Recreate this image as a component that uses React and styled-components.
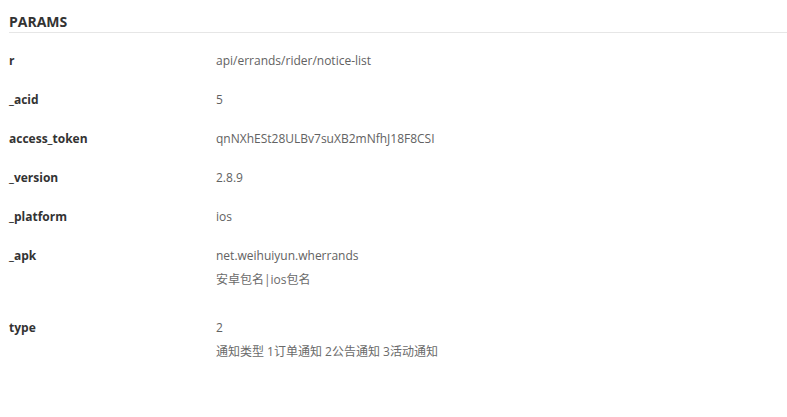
import React from "react";
import styled, { createGlobalStyle } from "styled-components";

const GlobalStyle = createGlobalStyle`
  html, body {
    margin: 0;
    padding: 0;
    background: #fff;
  }
  body {
    font-family: "Open Sans", "Noto Sans CJK SC", sans-serif;
  }
`;

const params = [
  { name: "r", value: "api/errands/rider/notice-list" },
  { name: "_acid", value: "5" },
  { name: "access_token", value: "qnNXhESt28ULBv7suXB2mNfhJ18F8CSI" },
  { name: "_version", value: "2.8.9" },
  { name: "_platform", value: "ios" },
  { name: "_apk", value: "net.weihuiyun.wherrands", desc: "安卓包名|ios包名" },
  { name: "type", value: "2", desc: "通知类型 1订单通知 2公告通知 3活动通知" },
];

const Section = styled.section`
  padding: 0 0 0 9px;
`;

const Title = styled.h3`
  margin: 0;
  padding: 12px 0 1px;
  font-size: 14px;
  line-height: 19px;
  font-weight: 700;
  color: #333;
  border-bottom: 1px solid #e6e6e6;
`;

const Table = styled.div`
  display: flex;
  flex-direction: column;
  padding-top: 8px;
`;

const Row = styled.div`
  display: grid;
  grid-template-columns: 207px 1fr;
  padding: 10px 0;
  font-size: 12px;
  line-height: 19px;
`;

const Name = styled.div`
  font-weight: 700;
  color: #333;
`;

const Value = styled.div`
  color: #626262;
`;

const Desc = styled.p`
  margin: 5px 0 9px;
  color: #6a6a6a;
`;

export default function App() {
  return (
    <>
      <GlobalStyle />
      <Section>
        <Title>PARAMS</Title>
        <Table>
          {params.map((p) => (
            <Row key={p.name}>
              <Name>{p.name}</Name>
              <Value>
                {p.value}
                {p.desc && <Desc>{p.desc}</Desc>}
              </Value>
            </Row>
          ))}
        </Table>
      </Section>
    </>
  );
}
